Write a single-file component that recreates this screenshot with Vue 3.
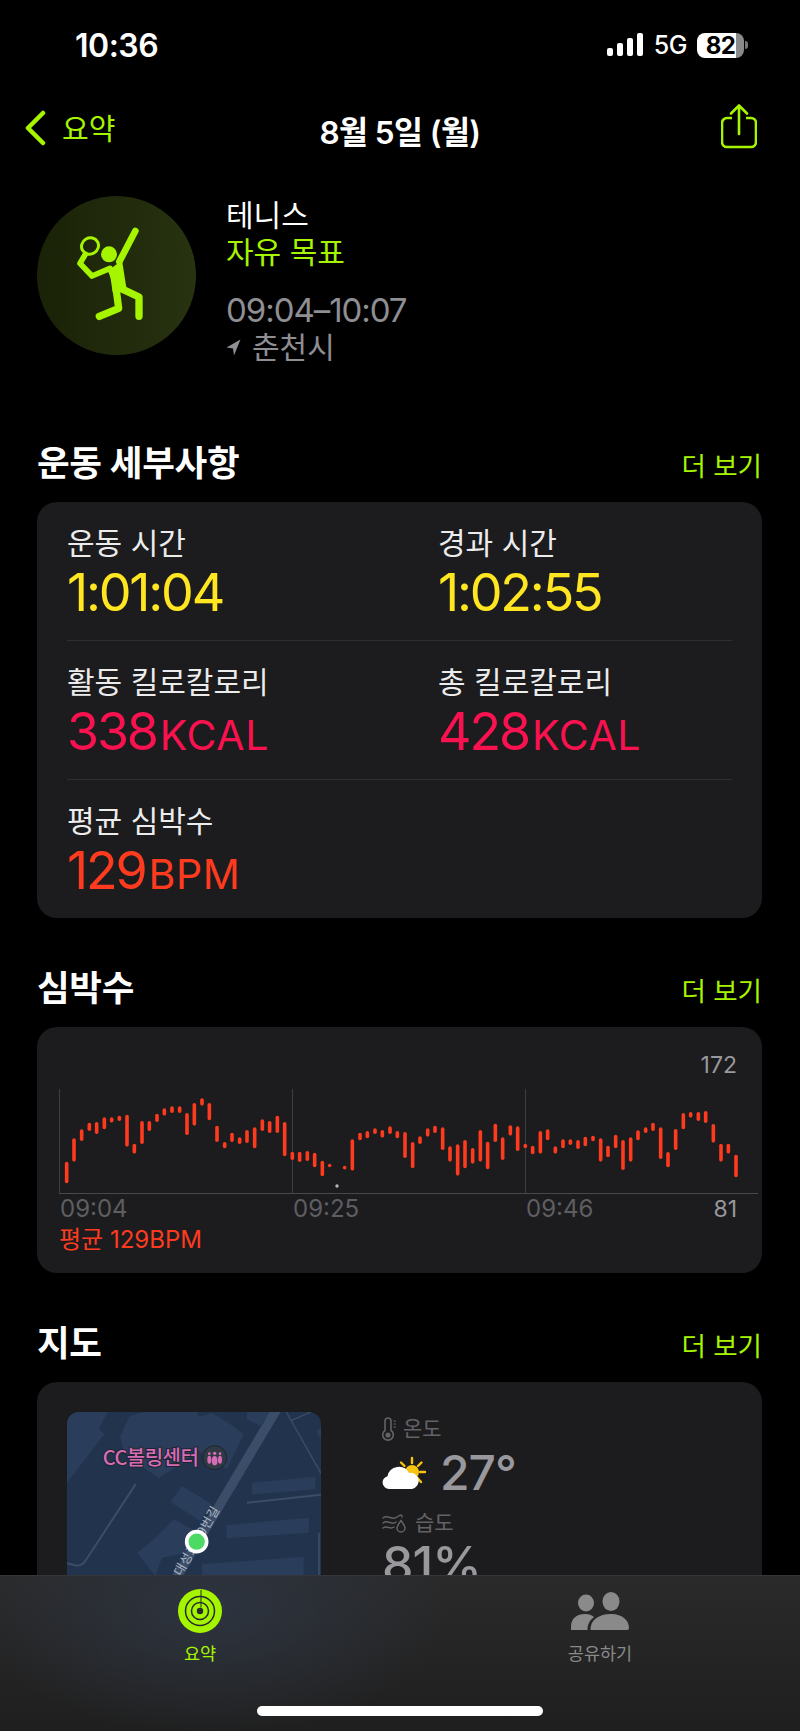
<template>
  <div class="page">
    <div class="status">
      <span class="clock">10:36</span>
      <div class="status-right">
        <svg class="signal" width="36" height="24" viewBox="0 0 36 24">
          <rect x="0" y="15" width="6" height="8" rx="2" />
          <rect x="10" y="10" width="6" height="13" rx="2" />
          <rect x="20" y="5" width="6" height="18" rx="2" />
          <rect x="30" y="0" width="6" height="23" rx="2" />
        </svg>
        <span class="net">5G</span>
        <div class="battery"><span>82</span></div>
        <i class="nub"></i>
      </div>
    </div>

    <div class="nav">
      <div class="back">
        <svg width="22" height="36" viewBox="0 0 22 36">
          <path d="M19 3 L4 18 L19 33" fill="none" stroke="#a6f500" stroke-width="4.5" stroke-linecap="round" stroke-linejoin="round" />
        </svg>
        <span>요약</span>
      </div>
      <div class="nav-title">8월 5일 (월)</div>
      <svg class="share" width="36" height="45" viewBox="0 0 36 45">
        <path d="M11 14 H6 a5 5 0 0 0 -5 5 V38 a5 5 0 0 0 5 5 H30 a5 5 0 0 0 5 -5 V19 a5 5 0 0 0 -5 -5 H25" fill="none" stroke="#a6f500" stroke-width="2.6" />
        <path d="M18 2 V30 M10 9.5 L18 1.5 L26 9.5" fill="none" stroke="#a6f500" stroke-width="2.6" stroke-linecap="round" stroke-linejoin="round" />
      </svg>
    </div>

    <div class="workout">
      <div class="badge">
        <svg width="159" height="159" viewBox="21 15 477 477">
          <ellipse cx="180" cy="165" rx="26" ry="24" fill="none" stroke="#a6f500" stroke-width="9" transform="rotate(-30 180 165)" />
          <circle cx="237" cy="190" r="24" fill="#a6f500" />
          <path d="M166 190 L150 217 L186 255 L240 232 L262 290" fill="none" stroke="#a6f500" stroke-width="17" stroke-linecap="round" stroke-linejoin="round" />
          <path d="M316 120 L268 212" fill="none" stroke="#a6f500" stroke-width="20" stroke-linecap="round" />
          <path d="M238 236 L276 208 L290 296 L248 304 Z" fill="#a6f500" />
          <path d="M272 292 L327 318 L327 376" fill="none" stroke="#a6f500" stroke-width="22" stroke-linecap="round" stroke-linejoin="round" />
          <path d="M258 290 L266 352 L208 376" fill="none" stroke="#a6f500" stroke-width="22" stroke-linecap="round" stroke-linejoin="round" />
        </svg>
      </div>
      <div class="workout-info">
        <div class="w-name">테니스</div>
        <div class="w-goal">자유 목표</div>
        <div class="w-time">09:04–10:07</div>
        <div class="w-place">
          <svg width="15" height="17" viewBox="0 0 15 17"><path d="M14.5 0.5 L0.5 8.5 L7 9.5 L8 16.5 Z" fill="#8e8e93" /></svg>
          <span>춘천시</span>
        </div>
      </div>
    </div>

    <section class="section first">
      <div class="sec-head">
        <h2>운동 세부사항</h2>
        <span class="more">더 보기</span>
      </div>
      <div class="card details">
        <div v-for="(row, i) in rows" :key="i" class="d-row">
          <div v-for="item in row" :key="item.label" class="d-item">
            <div class="d-label">{{ item.label }}</div>
            <div class="d-value" :class="item.tone">{{ item.value }}<small v-if="item.unit">{{ item.unit }}</small></div>
          </div>
        </div>
      </div>
    </section>

    <section class="section">
      <div class="sec-head">
        <h2>심박수</h2>
        <span class="more">더 보기</span>
      </div>
      <div class="card heart">
        <svg class="chart" width="725" height="198" viewBox="37 1027 725 198">
          <text x="737" y="1073" text-anchor="end" class="t-range">172</text>
          <path d="M59.5 1089 V1193 M292.5 1089 V1193 M525.5 1089 V1193" stroke="#3d3d40" stroke-width="1" />
          <path d="M59 1193.5 H758" stroke="#48484a" stroke-width="1" />
          <line v-for="(b, i) in bars" :key="i" :x1="b.x" :x2="b.x" :y1="b.y1" :y2="b.y2" stroke="#ff3b1f" stroke-width="3.6" stroke-linecap="round" />
          <circle cx="337" cy="1186" r="1.7" fill="#b5b5b5" />
          <text x="60" y="1217" class="t-time">09:04</text>
          <text x="293" y="1217" class="t-time">09:25</text>
          <text x="526" y="1217" class="t-time">09:46</text>
          <text x="737" y="1217" text-anchor="end" class="t-range">81</text>
        </svg>
        <div class="avg">평균 129BPM</div>
      </div>
    </section>

    <section class="section">
      <div class="sec-head">
        <h2>지도</h2>
        <span class="more">더 보기</span>
      </div>
      <div class="card mapcard">
        <div class="map">
          <svg width="254" height="254" viewBox="110 278 762 762">
            <rect x="110" y="278" width="762" height="762" fill="#22344d" />
            <g fill="#2a3d5a">
              <path d="M110 278 H232 L205 328 L222 345 L110 490 Z" />
              <path d="M298 290 L340 278 H500 L505 292 L545 280 L608 320 L640 345 L590 450 L490 385 L470 425 L385 475 L340 445 L280 395 L270 350 Z" />
              <path d="M650 278 H720 L690 320 L650 300 Z" />
              <path d="M455 500 L545 555 L510 605 L420 548 Z" />
              <path d="M430 600 L505 640 L470 700 L395 715 L375 770 L320 700 L365 665 Z" />
              <path d="M665 490 L855 472 V510 L665 525 Z" />
              <path d="M588 618 L835 595 V640 L590 657 Z" />
              <path d="M515 735 L820 712 V800 H515 Z" />
              <path d="M858 335 L872 325 V360 Z" />
            </g>
            <g fill="none" stroke="#3b4d68">
              <path d="M738 272 L440 772" stroke-width="28" />
              <path d="M768 278 L872 462" stroke-width="4" />
              <path d="M782 304 L842 278" stroke-width="4" />
              <path d="M650 550 L872 526" stroke-width="6" />
              <path d="M315 496 L165 725 Q152 742 134 738 L110 732" stroke-width="6" stroke-linecap="round" />
              <path d="M866 640 V800" stroke-width="5" />
            </g>
            <text x="0" y="0" class="road" transform="translate(452 772) rotate(-60)">대성로 39번길</text>
            <text x="217" y="438" class="poi">CC볼링센터</text>
            <circle cx="553" cy="415" r="36" fill="#2f3a44" stroke="#1d2430" stroke-width="3" />
            <g fill="#d76cb5">
              <ellipse cx="553" cy="424" rx="8.5" ry="14" />
              <circle cx="553" cy="402" r="5" />
              <ellipse cx="537" cy="421" rx="6" ry="12" />
              <circle cx="537" cy="403" r="4" />
              <ellipse cx="569" cy="421" rx="6" ry="12" />
              <circle cx="569" cy="403" r="4" />
            </g>
            <circle cx="499" cy="667" r="30" fill="#4cd964" stroke="#fff" stroke-width="11" />
          </svg>
        </div>
        <div class="weather">
          <div class="w-label">
            <svg width="14" height="24" viewBox="0 0 14 24" fill="none" stroke="#636366" stroke-width="1.6">
              <path d="M3 13.5 V4 a3 3 0 0 1 6 0 V13.5 a5.3 5.3 0 1 1 -6 0 Z" />
              <circle cx="6" cy="18" r="2.6" fill="#636366" stroke="none" />
              <path d="M11.5 4 H14 M11.5 7 H14 M11.5 10 H14" stroke-width="1" />
            </svg>
            <span>온도</span>
          </div>
          <div class="w-temp">
            <svg width="46" height="34" viewBox="0 0 46 34">
              <g stroke="#f7c412" stroke-width="2.4" stroke-linecap="round">
                <path d="M30 2 V7 M43 16 H38 M39.5 6.5 L36 10 M39 26 L35.5 22 M19 6.5 L22.5 10" />
              </g>
              <circle cx="30" cy="16" r="7" fill="#f7c412" />
              <path d="M7 33 a6.5 6.5 0 0 1 -1.5 -12.8 A11.5 11.5 0 0 1 27 17 a8 8 0 0 1 3 16 Z" fill="#fff" />
            </svg>
            <span>27°</span>
          </div>
          <div class="w-label hum">
            <svg width="26" height="20" viewBox="0 0 26 20" fill="none" stroke="#636366" stroke-width="1.5" stroke-linecap="round">
              <path d="M1 5 C6 1 10 8 15 4 C18 2 20 1 20 4 M1 10 C6 6 10 13 14 9 M1 15 C5 12 8 17 12 14" />
              <path d="M19 7.5 C16.5 11 15 13 15 15 a4 4 0 0 0 8 0 C23 13 21.5 11 19 7.5 Z" />
            </svg>
            <span>습도</span>
          </div>
          <div class="w-hum">81%</div>
        </div>
      </div>
    </section>

    <nav class="tabbar">
      <div class="tab on">
        <svg width="44" height="44" viewBox="0 0 44 44">
          <circle cx="22" cy="22" r="22" fill="#a6f500" />
          <circle cx="22" cy="22" r="14.5" fill="none" stroke="#232b2e" stroke-width="1.5" />
          <circle cx="22" cy="22" r="8.5" fill="none" stroke="#232b2e" stroke-width="1.5" />
          <circle cx="22" cy="22" r="3.2" fill="#232b2e" />
          <path d="M23 1 V7 M23 8 V13.5 M23 14 V18.5" stroke="#232b2e" stroke-width="1" />
        </svg>
        <span>요약</span>
      </div>
      <div class="tab">
        <svg width="58" height="38" viewBox="0 0 58 38" fill="#8a8a8a">
          <ellipse cx="15" cy="11" rx="8" ry="8.5" />
          <ellipse cx="40" cy="9.5" rx="8.5" ry="9.5" />
          <path d="M0 38 V35 C0 26 6 22 14 22 C18 22 21 23 23 25 C19 28 16.5 32 16.5 38 Z" />
          <path d="M19.5 38 C19 28 28 22 40 22 C52 22 58 29 58 36 a2 2 0 0 1 -2 2 Z" />
        </svg>
        <span>공유하기</span>
      </div>
      <div class="home"></div>
    </nav>
  </div>
</template>

<script setup>
import { computed } from 'vue'

const rows = [
  [
    { label: '운동 시간', value: '1:01:04', tone: 'yellow' },
    { label: '경과 시간', value: '1:02:55', tone: 'yellow' }
  ],
  [
    { label: '활동 킬로칼로리', value: '338', unit: 'KCAL', tone: 'pink' },
    { label: '총 킬로칼로리', value: '428', unit: 'KCAL', tone: 'pink' }
  ],
  [{ label: '평균 심박수', value: '129', unit: 'BPM', tone: 'red' }]
]

// x, top, bottom in 1/3 px, from the left edge of the screen minus 30 and y minus 1020
const raw = [
  [110,425,490],[132,355,425],[155,328,363],[178,308,333],[200,306,342],[223,292,328],[245,292,308],[268,287,303],
  [291,284,380],[313,371,401],[336,303,372],[358,303,333],[381,281,306],[403,265,287],[426,259,279],[449,259,279],
  [471,279,345],[493,249,317],[516,235,257],[538,249,301],[561,317,366],[584,366,385],[606,338,366],[629,352,372],
  [651,330,369],[674,322,385],[697,298,333],[719,303,339],[742,287,339],[764,306,409],[787,395,420],[809,395,426],
  [832,393,423],[854,398,442],[877,422,469],[899,431,442],[944,438,448],[967,358,452],[990,338,361],[1012,333,355],
  [1035,325,342],[1057,330,353],[1080,319,342],[1102,333,355],[1125,336,414],[1148,366,445],[1170,349,372],[1193,325,350],
  [1215,317,339],[1238,322,390],[1260,379,425],[1283,373,467],[1305,360,445],[1328,384,431],[1351,330,425],[1373,365,448],
  [1396,311,366],[1418,352,420],[1441,316,347],[1463,319,393],[1486,371,385],[1508,377,403],[1531,333,401],[1553,328,361],
  [1576,379,401],[1599,358,385],[1621,358,375],[1644,360,387],[1666,350,379],[1689,347,364],[1712,355,425],[1734,377,412],
  [1757,344,385],[1779,360,450],[1802,352,425],[1824,331,361],[1847,322,339],[1869,308,333],[1892,322,417],[1914,396,442],
  [1937,327,390],[1960,279,328],[1982,276,293],[2005,276,303],[2027,273,309],[2050,312,368],[2073,371,425],[2095,371,401],
  [2118,404,472]
]

const bars = computed(() =>
  raw.map(([x, a, b]) => ({
    x: 30 + x / 3,
    y1: 1020 + a / 3 + 1.8,
    y2: 1020 + b / 3 - 1.8
  }))
)
</script>

<style>
html, body { background: #000; }
</style>

<style scoped>
.page {
  position: relative;
  width: 800px;
  height: 1731px;
  overflow: hidden;
  background: #000;
  color: #fff;
  font-family: Inter, "Noto Sans CJK KR", sans-serif;
}

.status {
  height: 90px;
  display: flex;
  align-items: center;
  justify-content: space-between;
  padding: 0 52px 0 75px;
}
.clock { font-size: 32px; font-weight: 600; letter-spacing: -0.5px; }
.status-right { display: flex; align-items: center; }
.signal { fill: #fff; margin-right: 11px; }
.net { font-size: 25px; font-weight: 500; margin-right: 10px; letter-spacing: -0.5px; }
.battery {
  width: 47px;
  height: 25px;
  border-radius: 8px;
  background: linear-gradient(90deg, #fff 82%, #8a8a8a 82%);
  display: flex;
  align-items: center;
  justify-content: center;
  color: #000;
  font-size: 24px;
  font-weight: 700;
  letter-spacing: -0.5px;
}
.nub { width: 3px; height: 8px; margin-left: 1px; background: #777; border-radius: 0 3px 3px 0; }

.nav {
  height: 76px;
  padding: 0 43px 0 24px;
  display: flex;
  align-items: center;
  justify-content: space-between;
  position: relative;
}
.back { display: flex; align-items: center; gap: 16px; color: #a6f500; font-size: 29px; }
.back span { margin-top: -2px; }
.nav-title {
  position: absolute;
  left: 0;
  right: 0;
  top: 17px;
  text-align: center;
  font-size: 31.5px;
  font-weight: 600;
  letter-spacing: -0.6px;
}
.share { margin-bottom: 4px; }

.workout { display: flex; gap: 30px; padding: 30px 37px 0; height: 159px; }
.badge {
  width: 159px;
  height: 159px;
  border-radius: 50%;
  background: linear-gradient(90deg, #1a2207, #283311);
}
.w-name { font-size: 30px; line-height: 38px; }
.w-goal { font-size: 30px; line-height: 36px; color: #a6f500; }
.w-time { font-size: 33px; line-height: 40px; margin-top: 20px; color: #8e8e93; letter-spacing: -1.05px; }
.w-place { display: flex; align-items: center; gap: 11px; font-size: 30px; line-height: 34px; color: #8e8e93; }

.section { margin-top: 49px; padding: 0 38px 0 37px; }
.section.first { margin-top: 87px; }
.sec-head {
  height: 40px;
  margin-bottom: 20px;
  display: flex;
  align-items: center;
  justify-content: space-between;
}
h2 { margin: -4px 0 0; font-size: 35.5px; font-weight: 700; letter-spacing: -0.3px; }
.more { font-size: 26.5px; color: #a6f500; padding: 4px 0 0 0; }
.card { background: #1c1c1e; border-radius: 20px; }

.details { height: 416px; padding: 0 30px; }
.d-row {
  display: grid;
  grid-template-columns: 371px 1fr;
  padding-top: 24px;
  border-bottom: 1px solid #2f2f32;
  height: 114px;
}
.d-row:last-child { border-bottom: 0; }
.d-label { font-size: 30px; line-height: 34px; color: #ececec; }
.d-value { font-size: 52px; line-height: 62px; letter-spacing: -2.2px; margin-top: 2px; }
.d-value small { font-size: 41px; font-weight: 400; letter-spacing: 0.6px; margin-left: 3px; }
.yellow { color: #ffe620; }
.pink { color: #fa114f; }
.red { color: #ff3b1f; }

.heart { height: 246px; }
.chart { display: block; }
.t-range { font-size: 23px; fill: #98989d; font-family: Inter, sans-serif; }
.t-time { font-size: 24px; fill: #5e5e62; font-family: Inter, sans-serif; }
.avg { padding: 1px 0 0 22px; font-size: 24px; line-height: 28px; color: #ff3b1f; }

.mapcard { height: 380px; display: flex; padding: 30px 30px 0; gap: 61px; }
.map { width: 254px; height: 254px; border-radius: 12px; overflow: hidden; }
.map svg { display: block; }
.road { font-size: 38px; fill: #a9b3c2; font-family: "Noto Sans CJK KR", sans-serif; letter-spacing: 1px; }
.poi {
  font-size: 60px;
  font-weight: 500;
  fill: #d76cb5;
  stroke: #1d2430;
  stroke-width: 6px;
  paint-order: stroke;
  letter-spacing: -1.5px;
  font-family: "Noto Sans CJK KR", sans-serif;
}
.weather { flex: 1; }
.w-label { display: flex; align-items: center; gap: 7px; font-size: 21px; line-height: 24px; color: #636366; margin-top: 5px; }
.w-temp { display: flex; align-items: center; gap: 12px; margin-top: 9px; font-size: 48px; line-height: 46px; font-weight: 500; color: #98989d; letter-spacing: -1px; }
.w-label.hum { margin-top: 15px; }
.w-hum { font-size: 50px; line-height: 56px; font-weight: 500; color: #98989d; letter-spacing: -1px; margin-top: 1px; }

.tabbar {
  position: absolute;
  left: 0;
  right: 0;
  top: 1575px;
  height: 156px;
  display: grid;
  grid-template-columns: 1fr 1fr;
  padding: 13px 0 0;
  box-sizing: border-box;
  border-top: 1px solid #34363a;
  background:
    radial-gradient(ellipse 240px 130px at 210px 30px, #2d3440, rgba(45, 52, 64, 0) 100%),
    linear-gradient(180deg, #2a2a2a, #1f1f1f);
}
.tab {
  display: flex;
  flex-direction: column;
  align-items: center;
  height: 80px;
  color: #8a8a8a;
  font-size: 17.5px;
}
.tab svg { height: 44px; }
.tab span { margin-top: 9px; line-height: 24px; }
.tab.on { color: #a6f500; }
.home {
  position: absolute;
  left: 257px;
  bottom: 15px;
  width: 286px;
  height: 10px;
  border-radius: 5px;
  background: #fff;
}
</style>
